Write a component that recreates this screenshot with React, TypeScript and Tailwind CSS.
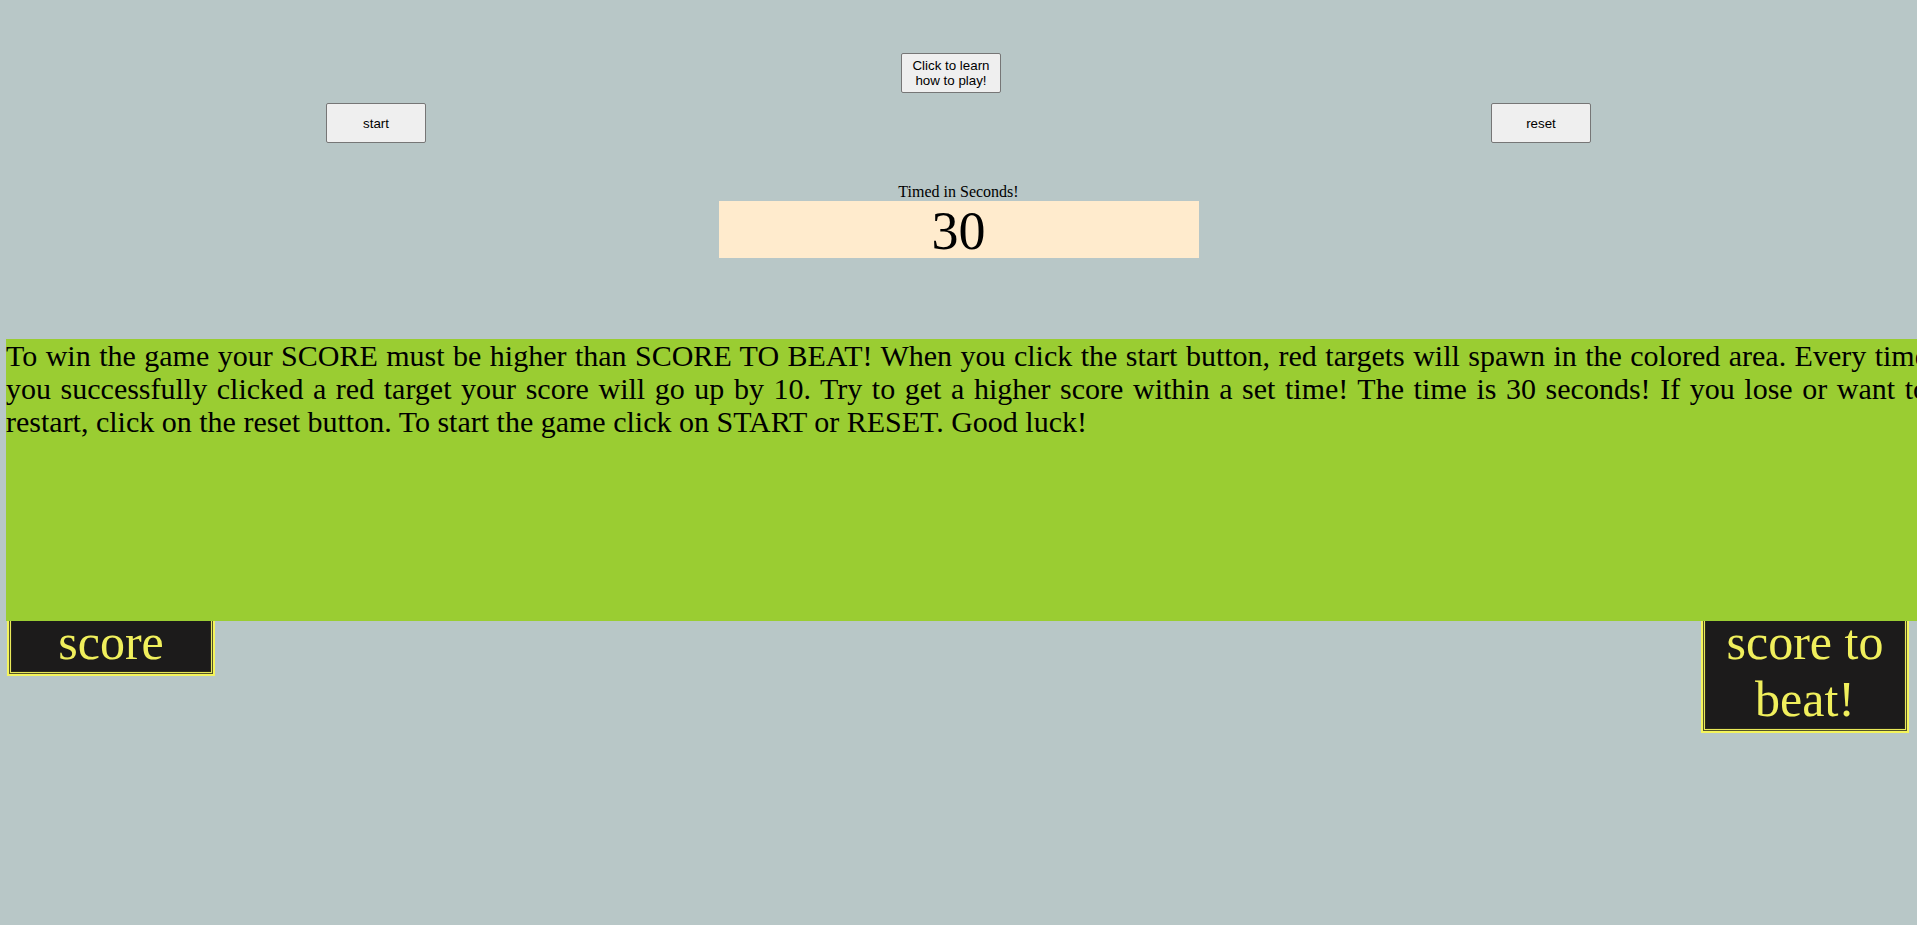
import React from 'react';

const introLines = [
  'To win the game your SCORE must be higher than SCORE TO BEAT! When you click the start button, red targets will spawn in the colored area. Every time',
  'you successfully clicked a red target your score will go up by 10. Try to get a higher score within a set time! The time is 30 seconds! If you lose or want to',
];
const introLast = 'restart, click on the reset button. To start the game click on START or RESET. Good luck!';

const btn =
  "bg-[#efefef] border border-[#767676] rounded-[2px] text-[13.33px] leading-[15px] text-black font-['Liberation_Sans',Arial,sans-serif]";

const ScoreBox = ({ label }: { label: string }) => (
  <div className="w-[208px] border-2 border-[#f4f45c] bg-[#1c1b1b] shadow-[inset_0_0_0_1px_#55552a,inset_0_0_0_2px_#e9e95a,inset_0_0_0_3px_#2a2a1c]">
    <div className="px-[5px] py-[3px] text-center text-[50px] leading-[57px] text-[#f0ef5c] font-['Liberation_Serif','Times_New_Roman',serif]">
      {label}
    </div>
  </div>
);

export default function App() {
  return (
    <div className="min-h-[925px] w-full overflow-hidden bg-[#b8c7c7] font-['Liberation_Serif','Times_New_Roman',serif] text-black">
      <div className="flex pt-[53px] pl-[901px]">
        <button className={`${btn} w-[100px] h-[40px] px-[6px]`}>Click to learn how to play!</button>
      </div>

      <div className="flex justify-between px-[326px] mt-[10px]">
        <button className={`${btn} w-[100px] h-[40px]`}>start</button>
        <button className={`${btn} w-[100px] h-[40px]`}>reset</button>
      </div>

      <div className="mt-[40px] flex flex-col items-center">
        <div className="text-[16px] leading-[18px]">Timed in Seconds!</div>
        <div className="w-[480px] h-[57px] bg-[#ffebcd] text-center text-[54px] leading-[60px]">30</div>
      </div>

      <div className="relative z-10 mt-[81px] ml-[6px] w-[1922px] h-[282px] bg-[#9acd32] text-[30px] leading-[33px]">
        {introLines.map((line) => (
          <div key={line} className="whitespace-nowrap text-justify [text-align-last:justify]">
            {line}
          </div>
        ))}
        <div>{introLast}</div>
      </div>

      <div className="flex justify-between items-start px-[7px] mt-[-12px] pr-[8px]">
        <ScoreBox label="score" />
        <ScoreBox label="score to beat!" />
      </div>
    </div>
  );
}
